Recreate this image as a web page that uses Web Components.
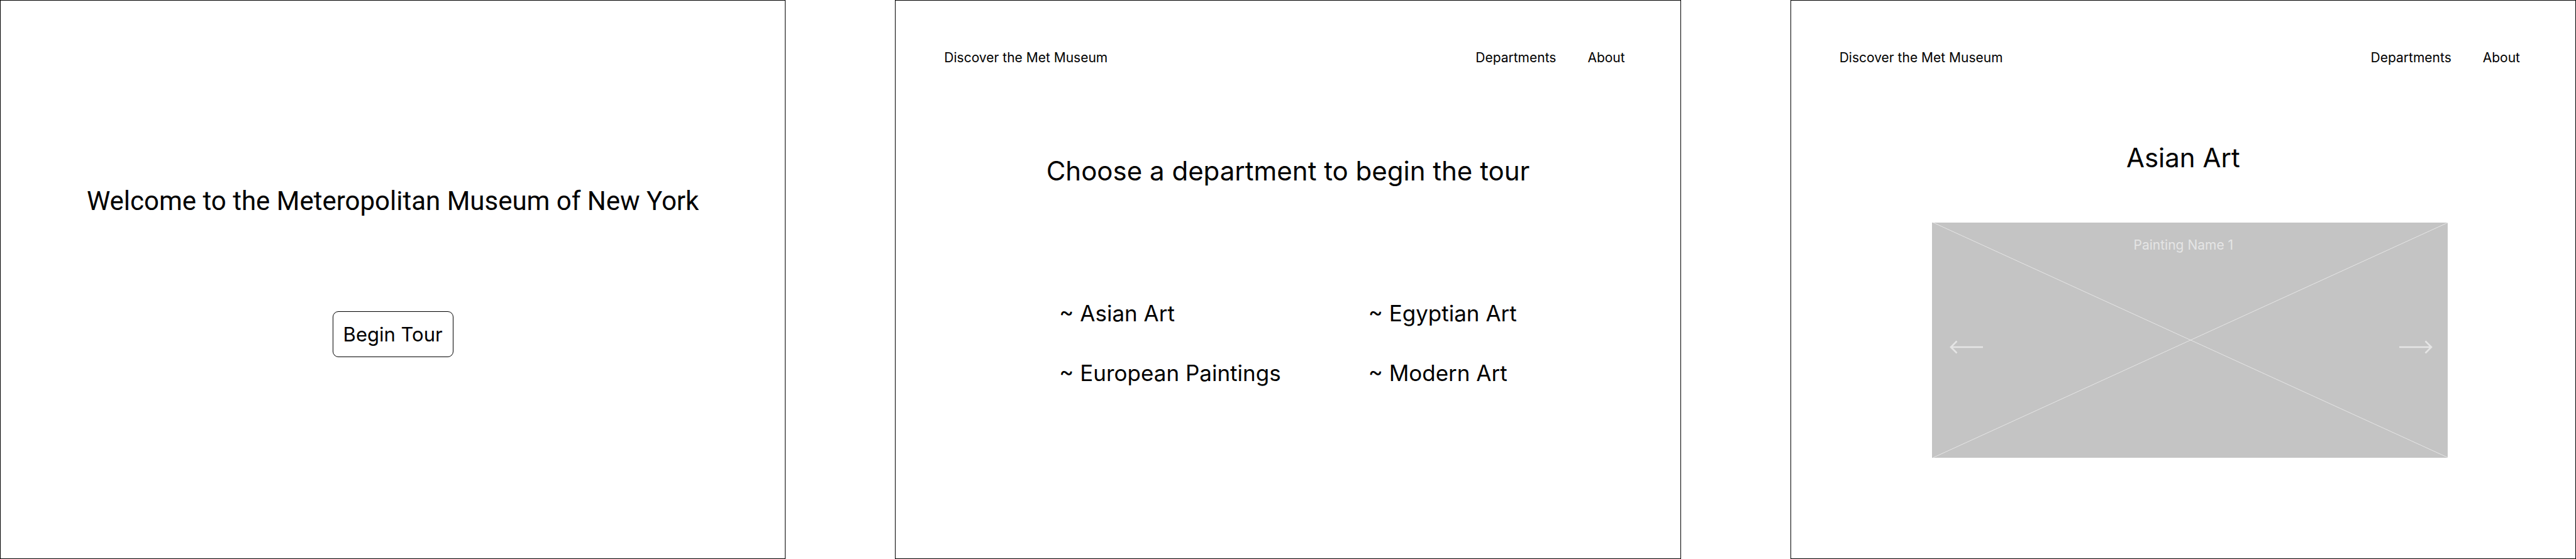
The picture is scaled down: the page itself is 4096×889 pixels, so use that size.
<!DOCTYPE html>
<html lang="en">
<head>
<meta charset="utf-8">
<title>Discover the Met Museum</title>
<style>
  body { margin: 0; background: #fff; color: #000; font-family: Inter, "Liberation Sans", sans-serif; }
</style>
</head>
<body>
<met-board>
  <met-screen>
    <met-welcome>Welcome to the Meteropolitan Museum of New York</met-welcome>
  </met-screen>
  <met-screen>
    <met-header></met-header>
    <met-departments>Choose a department to begin the tour</met-departments>
  </met-screen>
  <met-screen>
    <met-header></met-header>
    <met-gallery>Asian Art<span slot="caption">Painting Name 1</span></met-gallery>
  </met-screen>
</met-board>
<script>
  const define = (name, html) => customElements.define(name, class extends HTMLElement {
    constructor() {
      super();
      this.attachShadow({ mode: "open" }).innerHTML = html;
    }
  });

  define("met-board", `
    <style>
      :host { display: grid; grid-template-columns: repeat(3, minmax(0, 1fr)); gap: 174px; min-height: 100vh; }
    </style>
    <slot></slot>`);

  define("met-screen", `
    <style>
      :host { display: flex; flex-direction: column; box-sizing: border-box; border: 1px solid #000; background: #fff; }
    </style>
    <slot></slot>`);

  define("met-welcome", `
    <style>
      :host { display: flex; flex-direction: column; align-items: center; gap: 150px; padding-top: 294px; }
      h1 { margin: 0; font: 400 42px/50px Roboto, sans-serif; text-align: center; }
      button { box-sizing: border-box; min-height: 73px; padding: 0 16px; border: 1px solid #000; border-radius: 9px; background: #fff; color: #000; font: 400 31px/38px Inter, sans-serif; }
    </style>
    <h1><slot></slot></h1>
    <button type="button">Begin Tour</button>`);

  define("met-header", `
    <style>
      :host { display: flex; justify-content: space-between; padding: 78px 88px 0 77px; font-size: 21px; line-height: 26px; }
      nav { display: flex; gap: 50px; }
      a { color: inherit; text-decoration: none; }
    </style>
    <a href="#home">Discover the Met Museum</a>
    <nav><a href="#departments">Departments</a><a href="#about">About</a></nav>`);

  define("met-departments", `
    <style>
      :host { display: flex; flex-direction: column; align-items: center; gap: 180px; padding-top: 142px; }
      h2 { margin: 0; font-size: 42px; line-height: 50px; font-weight: 400; }
      ul { display: grid; grid-template-columns: max-content max-content; gap: 53px 139px; margin: 0; padding: 0; list-style: none; font-size: 35px; line-height: 42px; }
      a { color: inherit; text-decoration: none; }
    </style>
    <h2><slot></slot></h2>
    <ul>
      <li><a href="#asian">~ Asian Art</a></li>
      <li><a href="#egyptian">~ Egyptian Art</a></li>
      <li><a href="#european">~ European Paintings</a></li>
      <li><a href="#modern">~ Modern Art</a></li>
    </ul>`);

  define("met-gallery", `
    <style>
      :host { display: block; padding-top: 121px; }
      h2 { margin: 0 0 78px; font-size: 42px; line-height: 50px; font-weight: 400; text-align: center; }
      figure { position: relative; display: grid; grid-template: auto 1fr / 53px 1fr 53px; box-sizing: border-box; margin: 0 203px 0 224px; padding: 0 24px 26px 28px; aspect-ratio: 821 / 374; background: #c4c4c4; color: #e5e5e5; }
      .cross { position: absolute; inset: 0; width: 100%; height: 100%; }
      figcaption { grid-column: 1 / -1; padding: 23px 24px 0 0; font-size: 21px; line-height: 26px; text-align: center; }
      button { position: relative; grid-row: 2; align-self: center; height: 22px; padding: 0; border: 0; background: none; color: inherit; }
      button svg { display: block; }
      .next { grid-column: 3; }
    </style>
    <h2><slot></slot></h2>
    <figure>
      <svg class="cross" viewBox="0 0 821 374" preserveAspectRatio="none" fill="none" stroke="currentColor" aria-hidden="true"><path d="M2 0 821 374M2 374 821 0"/></svg>
      <figcaption><slot name="caption"></slot></figcaption>
      <button type="button" class="prev" aria-label="Previous painting"><svg width="53" height="22" fill="none" stroke="currentColor" stroke-width="2.6"><path d="M53 11H2M11.500 1.500 2 11l9.500 9.500"/></svg></button>
      <button type="button" class="next" aria-label="Next painting"><svg width="53" height="22" fill="none" stroke="currentColor" stroke-width="2.6"><path d="M0 11H51M41.500 1.500 51 11l-9.500 9.500"/></svg></button>
    </figure>`);
</script>
</body>
</html>
